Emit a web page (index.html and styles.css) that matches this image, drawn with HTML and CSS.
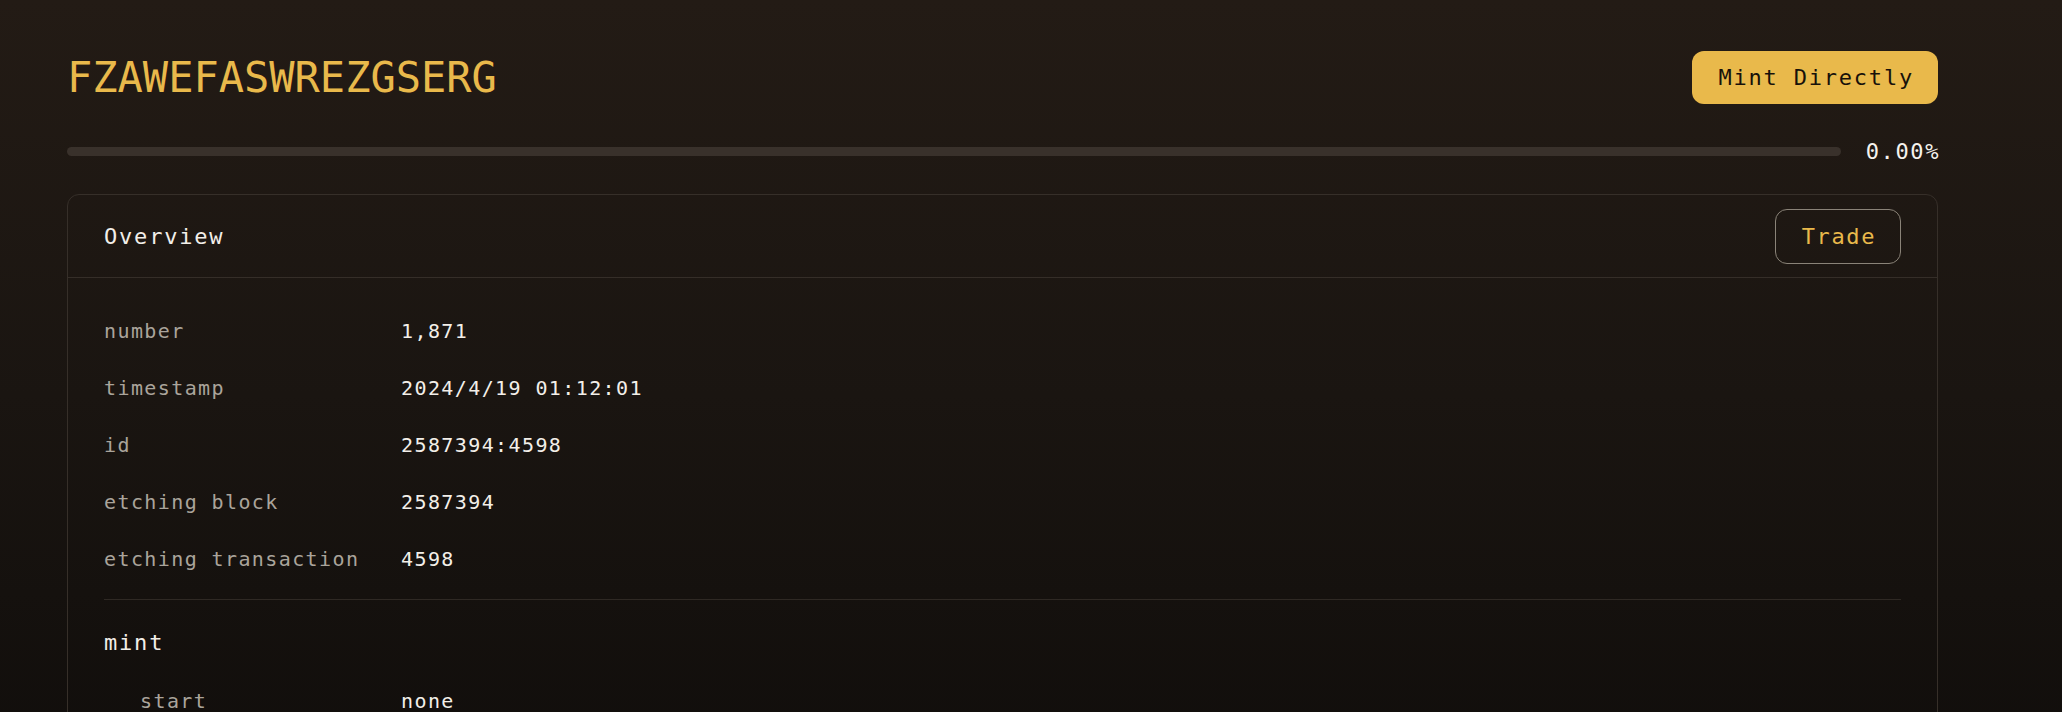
FILE: index.html
```html
<!DOCTYPE html>
<html lang="en">
<head>
<meta charset="utf-8">
<title>FZAWEFASWREZGSERG</title>
<link rel="stylesheet" href="styles.css">
</head>
<body>
<main class="page">
  <header class="top">
    <h1 class="title">FZAWEFASWREZGSERG</h1>
    <button class="btn-mint" type="button">Mint Directly</button>
  </header>
  <div class="progress">
    <div class="track"><div class="fill" style="width:0%"></div></div>
    <span class="pct">0.00%</span>
  </div>
  <section class="card">
    <div class="card-head">
      <h2 class="card-title">Overview</h2>
      <button class="btn-trade" type="button">Trade</button>
    </div>
    <div class="card-body">
      <dl class="rows">
        <div class="row"><dt>number</dt><dd>1,871</dd></div>
        <div class="row"><dt>timestamp</dt><dd>2024/4/19 01:12:01</dd></div>
        <div class="row"><dt>id</dt><dd>2587394:4598</dd></div>
        <div class="row"><dt>etching block</dt><dd>2587394</dd></div>
        <div class="row"><dt>etching transaction</dt><dd>4598</dd></div>
      </dl>
      <hr class="divider">
      <h3 class="sub">mint</h3>
      <dl class="rows nested">
        <div class="row"><dt>start</dt><dd>none</dd></div>
      </dl>
    </div>
  </section>
</main>
</body>
</html>
```

FILE: styles.css
```css
html, body {
  margin: 0;
  padding: 0;
}

body {
  min-height: 100vh;
  background: linear-gradient(180deg, #231b15 0%, #1a1511 50%, #100d0b 100%);
  font-family: "DejaVu Sans Mono", "Liberation Mono", monospace;
  color: #f0ece6;
}

.page {
  padding: 51px 124px 40px 67px;
}

.top {
  display: flex;
  align-items: center;
  justify-content: space-between;
  height: 53px;
}

.title {
  margin: 0;
  font-size: 42px;
  line-height: 1;
  font-weight: normal;
  color: #e9b94b;
  letter-spacing: 0;
}

.btn-mint {
  height: 53px;
  padding: 0 24px 0 26px;
  border: none;
  border-radius: 12px;
  background: #e9b94b;
  color: #17110a;
  font-family: inherit;
  font-size: 22px;
  letter-spacing: 1.8px;
  cursor: pointer;
}

.progress {
  display: flex;
  align-items: center;
  gap: 25px;
  height: 28px;
  margin-top: 33px;
}

.track {
  flex: 1;
  height: 9px;
  border-radius: 5px;
  background: #39312b;
  overflow: hidden;
}

.fill {
  height: 100%;
  background: #e9b94b;
}

.pct {
  font-size: 22px;
  letter-spacing: 1.6px;
  color: #f6f3ee;
  margin-right: -2px;
}

.card {
  margin-top: 29px;
  border: 1px solid #362f29;
  border-radius: 12px;
}

.card-head {
  display: flex;
  align-items: center;
  justify-content: space-between;
  padding: 14px 36px 13px;
  border-bottom: 1px solid #352e28;
}

.card-title {
  margin: 0;
  font-size: 22px;
  font-weight: normal;
  letter-spacing: 1.8px;
  color: #f2eee8;
}

.btn-trade {
  height: 55px;
  padding: 0 24px 0 26px;
  border: 1px solid #8a8378;
  border-radius: 12px;
  background: transparent;
  color: #e9b94b;
  font-family: inherit;
  font-size: 22px;
  letter-spacing: 1.6px;
  cursor: pointer;
}

.card-body {
  padding: 25px 36px 20px;
}

.rows {
  margin: 0;
}

.row {
  display: grid;
  grid-template-columns: 297px 1fr;
  line-height: 57px;
  font-size: 20px;
  letter-spacing: 1.4px;
}

.row dt {
  color: #aaa49b;
}

.row dd {
  margin: 0;
  color: #f3efe9;
}

.nested .row dt {
  padding-left: 36px;
}

.divider {
  margin: 11px 0 0;
  border: none;
  border-top: 1px solid #2f2924;
}

.sub {
  margin: 23px 0 10px;
  font-size: 22px;
  line-height: 40px;
  font-weight: normal;
  letter-spacing: 1.8px;
  color: #f2eee8;
}
```
